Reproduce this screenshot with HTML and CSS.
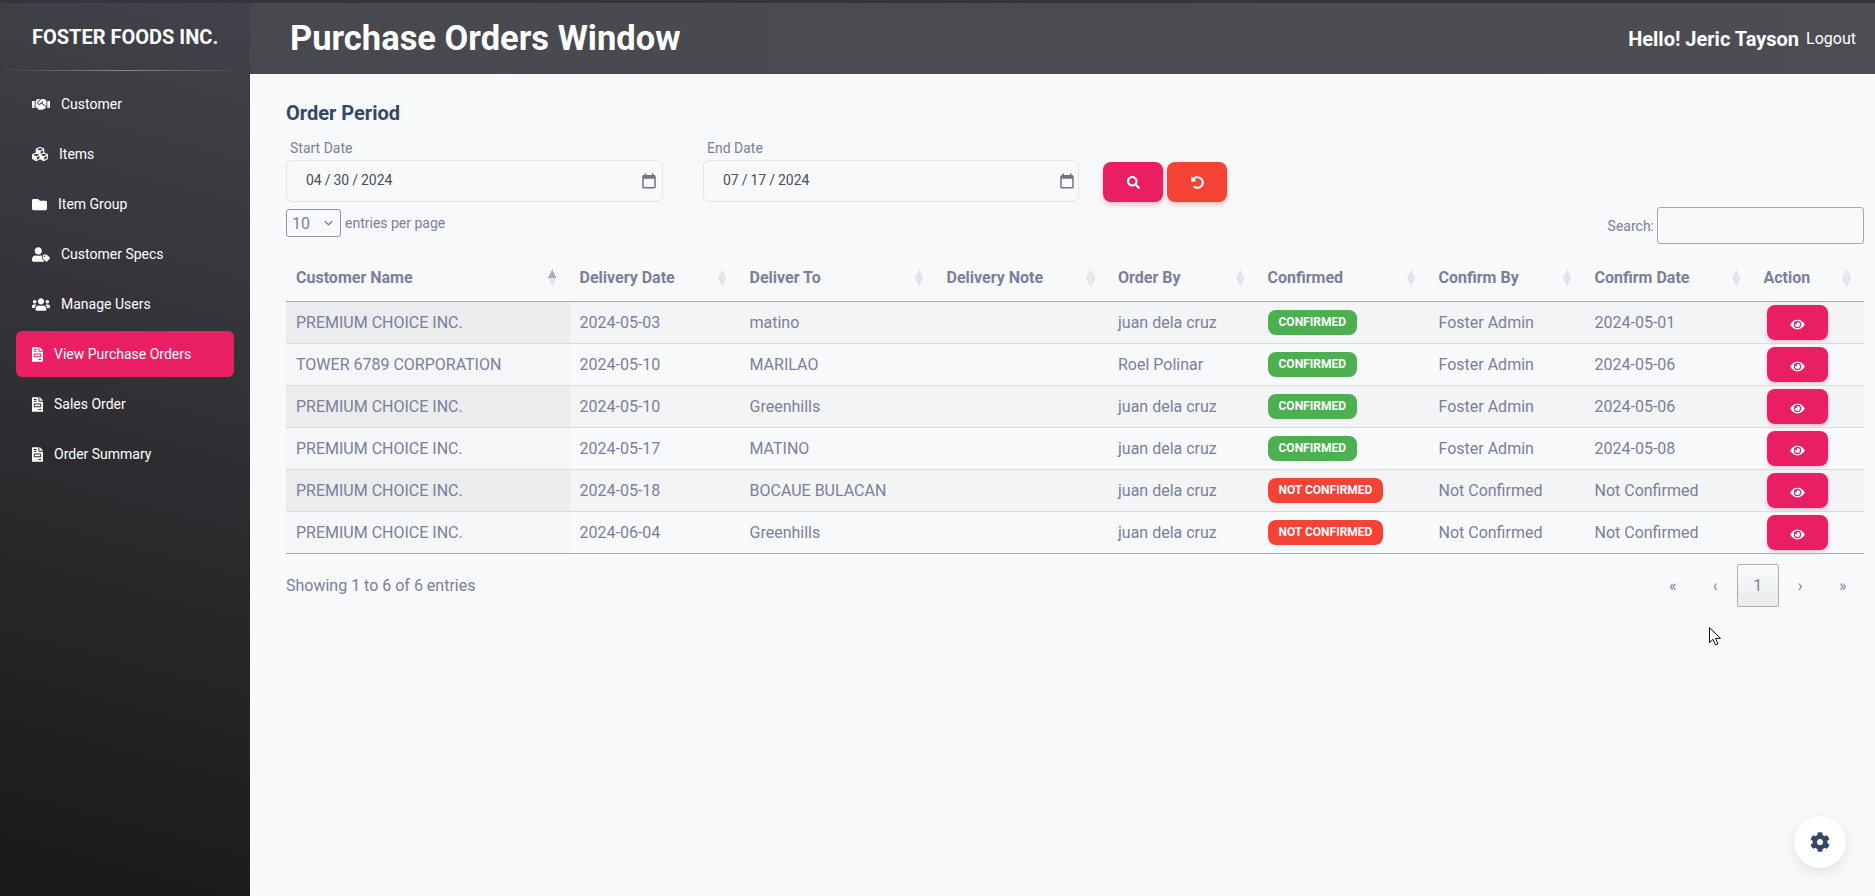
FILE: index.html
```html
<!DOCTYPE html>
<html lang="en">
<head>
    <meta charset="UTF-8">
    <meta name="viewport" content="width=device-width, initial-scale=1.0">
    <title>Purchase Orders Window</title>
    <link rel="stylesheet" href="styles.css">
</head>
<body>
    <svg class="icon-defs" xmlns="http://www.w3.org/2000/svg">
        <symbol id="i-handshake" viewBox="0 0 640 512"><path d="M434.7 64h-85.9c-8 0-15.7 3-21.6 8.4l-98.3 90c-.1.1-.2.3-.3.4-16.6 15.6-16.3 40.5-2.1 56 12.7 13.9 39.4 17.6 56.1 2.7.1-.1.3-.1.4-.2l79.9-73.2c6.5-5.9 16.7-5.5 22.6 1 6 6.5 5.5 16.6-1 22.6l-26.1 23.9L504 313.8c2.9 2.4 5.5 5 7.9 7.7V128l-54.6-54.6c-5.9-6-14.1-9.4-22.6-9.4zM544 128.2v223.9c0 17.7 14.3 32 32 32h64V128.2h-96zm48 223.9c-8.8 0-16-7.2-16-16s7.2-16 16-16 16 7.2 16 16-7.2 16-16 16zM0 384h64c17.7 0 32-14.3 32-32V128.2H0V384zm48-63.9c8.8 0 16 7.2 16 16s-7.2 16-16 16-16-7.2-16-16c0-8.9 7.2-16 16-16zm435.9 18.6L334.6 217.5l-30 27.5c-29.7 27.1-75.2 24.5-101.7-4.4-26.9-29.4-24.8-74.9 4.4-101.7L289.1 64h-83.8c-8.5 0-16.6 3.4-22.6 9.4L128 128v223.9h18.3l90.5 81.9c27.4 22.3 67.7 18.1 90-9.3l.2-.2 17.9 15.5c15.9 13 39.4 10.5 52.3-5.4l31.4-38.6 5.4 4.4c13.7 11.1 33.9 9.1 45-4.7l9.5-11.7c11.2-13.8 9.1-33.9-4.6-45.1z"/></symbol>
        <symbol id="i-cubes" viewBox="0 0 512 512"><path d="M488.6 250.2L392 214V105.5c0-15-9.3-28.4-23.4-33.7l-100-37.5c-8.1-3.1-17.1-3.1-25.3 0l-100 37.5c-14.1 5.3-23.4 18.7-23.4 33.7V214l-96.6 36.2C9.3 255.5 0 268.9 0 283.9V394c0 13.6 7.7 26.1 19.9 32.2l100 50c10.1 5.1 22.1 5.1 32.2 0l103.9-52 103.9 52c10.1 5.1 22.1 5.1 32.2 0l100-50c12.2-6.1 19.9-18.6 19.9-32.2V283.9c0-15-9.3-28.4-23.4-33.7zM358 214.8l-85 31.9v-68.2l85-37v73.3zM154 104.1l102-38.2 102 38.2v.6l-102 41.4-102-41.4v-.6zm84 291.1l-85 42.5v-79.1l85-38.8v75.4zm0-112l-102 41.4-102-41.4v-.6l102-38.2 102 38.2v.6zm240 112l-85 42.5v-79.1l85-38.8v75.4zm0-112l-102 41.4-102-41.4v-.6l102-38.2 102 38.2v.6z"/></symbol>
        <symbol id="i-folder" viewBox="0 0 512 512"><path d="M464 128H272l-64-64H48C21.49 64 0 85.49 0 112v288c0 26.51 21.49 48 48 48h416c26.51 0 48-21.49 48-48V176c0-26.51-21.49-48-48-48z"/></symbol>
        <symbol id="i-usertag" viewBox="0 0 640 512"><path d="M630.6 364.9l-90.3-90.2c-12-12-28.3-18.7-45.3-18.7h-79.3c-17.7 0-32 14.3-32 32v79.2c0 17 6.7 33.2 18.7 45.2l90.3 90.2c12.5 12.5 32.8 12.5 45.3 0l92.5-92.5c12.6-12.4 12.6-32.7.1-45.2zm-182.8-21c-13.3 0-24-10.7-24-24s10.7-24 24-24 24 10.7 24 24c0 13.2-10.7 24-24 24zm-223.8-88c70.7 0 128-57.3 128-128C352 57.3 294.7 0 224 0S96 57.3 96 128c0 70.6 57.3 127.9 128 127.9zm127.8 111.2V294c-12.2-3.6-24.9-6.2-38.2-6.2h-16.7c-22.2 10.2-46.9 16-72.9 16s-50.6-5.8-72.9-16h-16.7C60.2 287.9 0 348.1 0 422.3v41.6c0 26.5 21.5 48 48 48h352c15.5 0 29.1-7.5 37.9-18.9l-58-58c-18.1-18.1-28.1-42.2-28.1-67.9z"/></symbol>
        <symbol id="i-users" viewBox="0 0 640 512"><path d="M96 224c35.3 0 64-28.7 64-64s-28.7-64-64-64-64 28.7-64 64 28.7 64 64 64zm448 0c35.3 0 64-28.7 64-64s-28.7-64-64-64-64 28.7-64 64 28.7 64 64 64zm32 32h-64c-17.6 0-33.5 7.1-45.1 18.6 40.3 22.1 68.9 62 75.1 109.4h66c17.7 0 32-14.3 32-32v-32c0-35.3-28.7-64-64-64zm-256 0c61.9 0 112-50.1 112-112S381.9 32 320 32 208 82.1 208 144s50.1 112 112 112zm76.8 32h-8.3c-20.8 10-43.9 16-68.5 16s-47.6-6-68.5-16h-8.3C179.6 288 128 339.6 128 403.2V432c0 26.5 21.5 48 48 48h288c26.5 0 48-21.5 48-48v-28.8c0-63.6-51.6-115.2-115.2-115.2zm-223.7-13.4C161.5 263.1 145.6 256 128 256H64c-35.3 0-64 28.7-64 64v32c0 17.7 14.3 32 32 32h65.9c6.3-47.4 34.9-87.3 75.2-109.4z"/></symbol>
        <symbol id="i-invoice" viewBox="0 0 384 512"><path d="M288 256H96v64h192v-64zm89-151L279.1 7c-4.5-4.5-10.6-7-17-7H256v128h128v-6.1c0-6.3-2.5-12.4-7-16.9zm-153 31V0H24C10.7 0 0 10.7 0 24v464c0 13.3 10.7 24 24 24h336c13.3 0 24-10.7 24-24V160H248c-13.2 0-24-10.8-24-24zM64 72c0-4.42 3.58-8 8-8h80c4.42 0 8 3.58 8 8v16c0 4.42-3.58 8-8 8H72c-4.42 0-8-3.58-8-8V72zm0 64c0-4.42 3.58-8 8-8h80c4.42 0 8 3.58 8 8v16c0 4.42-3.58 8-8 8H72c-4.42 0-8-3.58-8-8v-16zm256 304c0 4.42-3.58 8-8 8h-80c-4.42 0-8-3.58-8-8v-16c0-4.42 3.58-8 8-8h80c4.42 0 8 3.58 8 8v16zm0-200v96c0 8.84-7.16 16-16 16H80c-8.84 0-16-7.16-16-16v-96c0-8.84 7.16-16 16-16h224c8.84 0 16 7.16 16 16z"/></symbol>
        <symbol id="i-search" viewBox="0 0 512 512"><path d="M505 442.7L405.3 343c-4.5-4.5-10.6-7-17-7H372c27.6-35.3 44-79.7 44-128C416 93.1 322.9 0 208 0S0 93.1 0 208s93.1 208 208 208c48.3 0 92.7-16.4 128-44v16.3c0 6.4 2.5 12.5 7 17l99.7 99.7c9.4 9.4 24.6 9.4 33.9 0l28.3-28.3c9.4-9.4 9.4-24.6.1-34zM208 336c-70.7 0-128-57.2-128-128 0-70.7 57.2-128 128-128 70.7 0 128 57.2 128 128 0 70.7-57.2 128-128 128z"/></symbol>
        <symbol id="i-undo" viewBox="0 0 512 512"><path d="M255.545 8c-66.269.119-126.438 26.233-170.86 68.685L48.971 40.971C33.851 25.851 8 36.559 8 57.941V192c0 13.255 10.745 24 24 24h134.059c21.382 0 32.09-25.851 16.971-40.971l-41.75-41.75c30.864-28.899 70.801-44.907 113.23-45.273 92.398-.798 170.283 73.977 169.484 169.442C423.236 348.009 349.816 424 256 424c-41.127 0-79.997-14.678-110.63-41.556-4.743-4.161-11.906-3.908-16.368.553L89.34 422.659c-4.872 4.872-4.631 12.815.482 17.433C133.798 479.813 192.074 504 256 504c136.966 0 247.999-111.033 248-247.998C504.001 119.193 392.354 7.755 255.545 8z"/></symbol>
        <symbol id="i-eye" viewBox="0 0 576 512"><path d="M572.52 241.4C518.29 135.59 410.93 64 288 64S57.68 135.64 3.48 241.41a32.35 32.35 0 0 0 0 29.19C57.71 376.41 165.07 448 288 448s230.32-71.64 284.52-177.41a32.35 32.35 0 0 0 0-29.19zM288 400a144 144 0 1 1 144-144 143.93 143.93 0 0 1-144 144zm0-240a95.31 95.31 0 0 0-25.31 3.79 47.85 47.85 0 0 1-66.9 66.9A95.78 95.78 0 1 0 288 160z"/></symbol>
        <symbol id="i-cog" viewBox="0 0 512 512"><path d="M487.4 315.7l-42.6-24.6c4.3-23.2 4.3-47 0-70.2l42.6-24.6c4.9-2.8 7.1-8.6 5.5-14-11.1-35.6-30-67.8-54.7-94.6-3.8-4.1-10-5.1-14.8-2.3L380.8 110c-17.9-15.4-38.5-27.3-60.8-35.1V25.8c0-5.6-3.9-10.5-9.4-11.7-36.7-8.2-74.3-7.8-109.2 0-5.5 1.2-9.4 6.1-9.4 11.7V75c-22.2 7.9-42.8 19.8-60.8 35.1L88.7 85.5c-4.9-2.8-11-1.9-14.8 2.3-24.7 26.7-43.6 58.9-54.7 94.6-1.7 5.4.6 11.2 5.5 14L67.3 221c-4.3 23.2-4.3 47 0 70.2l-42.6 24.6c-4.9 2.8-7.1 8.6-5.5 14 11.1 35.6 30 67.8 54.7 94.6 3.8 4.1 10 5.1 14.8 2.3l42.6-24.6c17.9 15.4 38.5 27.3 60.8 35.1v49.2c0 5.6 3.9 10.5 9.4 11.7 36.7 8.2 74.3 7.8 109.2 0 5.5-1.2 9.4-6.1 9.4-11.7v-49.2c22.2-7.9 42.8-19.8 60.8-35.1l42.6 24.6c4.9 2.8 11 1.9 14.8-2.3 24.7-26.7 43.6-58.9 54.7-94.6 1.5-5.5-.7-11.3-5.6-14.1zM256 336c-44.1 0-80-35.9-80-80s35.9-80 80-80 80 35.9 80 80-35.9 80-80 80z"/></symbol>
        <symbol id="i-calendar" viewBox="0 0 24 24"><path d="M19 4h-1V2h-2v2H8V2H6v2H5a2 2 0 0 0-2 2v14a2 2 0 0 0 2 2h14a2 2 0 0 0 2-2V6a2 2 0 0 0-2-2zm0 16H5V9h14v11z"/></symbol>
    </svg>

    <div class="app">
        <aside class="sidebar">
            <div class="brand">FOSTER FOODS INC.</div>
            <hr class="brand-line">
            <nav class="side-nav">
                <a class="nav-item"><svg class="nav-icon w-wide"><use href="#i-handshake"/></svg>Customer</a>
                <a class="nav-item"><svg class="nav-icon w-cubes"><use href="#i-cubes"/></svg>Items</a>
                <a class="nav-item"><svg class="nav-icon w-folder"><use href="#i-folder"/></svg>Item Group</a>
                <a class="nav-item"><svg class="nav-icon w-wide"><use href="#i-usertag"/></svg>Customer Specs</a>
                <a class="nav-item"><svg class="nav-icon w-wide"><use href="#i-users"/></svg>Manage Users</a>
                <a class="nav-item active"><svg class="nav-icon w-file"><use href="#i-invoice"/></svg>View Purchase Orders</a>
                <a class="nav-item"><svg class="nav-icon w-file"><use href="#i-invoice"/></svg>Sales Order</a>
                <a class="nav-item"><svg class="nav-icon w-file"><use href="#i-invoice"/></svg>Order Summary</a>
            </nav>
        </aside>

        <div class="main">
            <header class="topbar">
                <h1>Purchase Orders Window</h1>
                <div class="user-box">
                    <strong>Hello! Jeric Tayson</strong>
                    <a class="logout">Logout</a>
                </div>
            </header>

            <section class="content">
                <h2>Order Period</h2>
                <div class="filters">
                    <div class="field">
                        <label>Start Date</label>
                        <div class="date-box"><span>04 / 30 / 2024</span><svg class="cal"><use href="#i-calendar"/></svg></div>
                    </div>
                    <div class="field field-end">
                        <label>End Date</label>
                        <div class="date-box"><span>07 / 17 / 2024</span><svg class="cal"><use href="#i-calendar"/></svg></div>
                    </div>
                    <div class="filter-btns">
                        <button class="btn btn-pink"><svg class="btn-icon"><use href="#i-search"/></svg></button>
                        <button class="btn btn-red"><svg class="btn-icon"><use href="#i-undo"/></svg></button>
                    </div>
                </div>

                <div class="table-top">
                    <div class="entries">
                        <span class="entries-select">10<svg class="chev" viewBox="0 0 10 6"><path d="M1 1l4 4 4-4" fill="none" stroke="currentColor" stroke-width="1.4"/></svg></span>
                        <span>entries per page</span>
                    </div>
                    <div class="search-wrap">
                        <span>Search:</span>
                        <span class="search-box"></span>
                    </div>
                </div>

                <table class="orders">
                    <thead>
                        <tr>
                            <th class="c1 sorted"><div class="th-in">Customer Name<i class="sort"></i></div></th>
                            <th class="c2"><div class="th-in">Delivery Date<i class="sort"></i></div></th>
                            <th class="c3"><div class="th-in">Deliver To<i class="sort"></i></div></th>
                            <th class="c4"><div class="th-in">Delivery Note<i class="sort"></i></div></th>
                            <th class="c5"><div class="th-in">Order By<i class="sort"></i></div></th>
                            <th class="c6"><div class="th-in">Confirmed<i class="sort"></i></div></th>
                            <th class="c7"><div class="th-in">Confirm By<i class="sort"></i></div></th>
                            <th class="c8"><div class="th-in">Confirm Date<i class="sort"></i></div></th>
                            <th class="c9"><div class="th-in">Action<i class="sort"></i></div></th>
                        </tr>
                    </thead>
                    <tbody>
                        <tr>
                            <td>PREMIUM CHOICE INC.</td><td>2024-05-03</td><td>matino</td><td></td><td>juan dela cruz</td>
                            <td><span class="badge ok">CONFIRMED</span></td><td>Foster Admin</td><td>2024-05-01</td>
                            <td><button class="btn-view"><svg class="eye"><use href="#i-eye"/></svg></button></td>
                        </tr>
                        <tr>
                            <td>TOWER 6789 CORPORATION</td><td>2024-05-10</td><td>MARILAO</td><td></td><td>Roel Polinar</td>
                            <td><span class="badge ok">CONFIRMED</span></td><td>Foster Admin</td><td>2024-05-06</td>
                            <td><button class="btn-view"><svg class="eye"><use href="#i-eye"/></svg></button></td>
                        </tr>
                        <tr>
                            <td>PREMIUM CHOICE INC.</td><td>2024-05-10</td><td>Greenhills</td><td></td><td>juan dela cruz</td>
                            <td><span class="badge ok">CONFIRMED</span></td><td>Foster Admin</td><td>2024-05-06</td>
                            <td><button class="btn-view"><svg class="eye"><use href="#i-eye"/></svg></button></td>
                        </tr>
                        <tr>
                            <td>PREMIUM CHOICE INC.</td><td>2024-05-17</td><td>MATINO</td><td></td><td>juan dela cruz</td>
                            <td><span class="badge ok">CONFIRMED</span></td><td>Foster Admin</td><td>2024-05-08</td>
                            <td><button class="btn-view"><svg class="eye"><use href="#i-eye"/></svg></button></td>
                        </tr>
                        <tr>
                            <td>PREMIUM CHOICE INC.</td><td>2024-05-18</td><td>BOCAUE BULACAN</td><td></td><td>juan dela cruz</td>
                            <td><span class="badge no">NOT CONFIRMED</span></td><td>Not Confirmed</td><td>Not Confirmed</td>
                            <td><button class="btn-view"><svg class="eye"><use href="#i-eye"/></svg></button></td>
                        </tr>
                        <tr>
                            <td>PREMIUM CHOICE INC.</td><td>2024-06-04</td><td>Greenhills</td><td></td><td>juan dela cruz</td>
                            <td><span class="badge no">NOT CONFIRMED</span></td><td>Not Confirmed</td><td>Not Confirmed</td>
                            <td><button class="btn-view"><svg class="eye"><use href="#i-eye"/></svg></button></td>
                        </tr>
                    </tbody>
                </table>

                <div class="table-foot">
                    <span>Showing 1 to 6 of 6 entries</span>
                    <div class="pager">
                        <a class="page-link small">«</a>
                        <a class="page-link small">‹</a>
                        <a class="page-link current">1</a>
                        <a class="page-link small">›</a>
                        <a class="page-link small">»</a>
                    </div>
                </div>
            </section>
        </div>
    </div>

    <!-- mouse pointer that was in the shot -->
    <svg class="pointer" viewBox="0 0 12 19"><path d="M.5.7v15l3.6-3.4 2.4 5.6 2.5-1-2.4-5.5h4.9z" fill="#fff" stroke="#111" stroke-width="1"/></svg>

    <a class="fab"><svg class="fab-icon"><use href="#i-cog"/></svg></a>
</body>
</html>
```

FILE: styles.css
```css
* {
    box-sizing: border-box;
}
html, body {
    height: 100%;
}
body {
    margin: 0;
    font-family: Roboto, "Liberation Sans", sans-serif;
    font-size: 14px;
    color: #7b809a;
    background: #f8f9fb;
    overflow: hidden;
}
.icon-defs {
    display: none;
}
.app {
    display: flex;
    height: 896px;
    border-top: 3px solid #35353b;
}

/* sidebar */
.sidebar {
    width: 250px;
    flex: none;
    background: linear-gradient(195deg, #42424a, #191919);
    color: #fff;
}
.brand {
    padding: 23px 0 0 32px;
    height: 67px;
    font-size: 20px;
    line-height: 23px;
    font-weight: 700;
}
.brand-line {
    margin: 0;
    height: 1px;
    border: 0;
    background: linear-gradient(90deg, rgba(255,255,255,0), rgba(255,255,255,.4), rgba(255,255,255,0));
}
.side-nav {
    padding-top: 6px;
}
.nav-item {
    display: flex;
    align-items: center;
    gap: 11px;
    height: 46px;
    margin: 4px 16px;
    padding-left: 16px;
    border-radius: 6px;
    font-size: 14px;
    color: #fff;
}
.nav-item.active {
    background: #e91e63;
}
.nav-icon {
    height: 15px;
    fill: #fff;
    flex: none;
}
.w-wide { width: 18px; }
.w-cubes { width: 16px; height: 16px; }
.w-folder { width: 15px; }
.w-file { width: 11px; height: 15px; }

/* top bar */
.main {
    flex: 1;
    min-width: 0;
}
.topbar {
    display: flex;
    align-items: center;
    justify-content: space-between;
    height: 71px;
    padding: 0 19px 2px 40px;
    background: linear-gradient(90deg, #48484f, #4e4d54);
    color: #fff;
}
.topbar h1 {
    margin: 0;
    font-size: 34.5px;
    font-weight: 700;
}
.user-box {
    display: flex;
    align-items: center;
    gap: 7px;
    margin-top: 2px;
    font-size: 20px;
}
.logout {
    font-size: 16px;
}

/* content */
.content {
    padding: 27px 11px 0 36px;
}
.content h2 {
    margin: 0;
    font-size: 20px;
    line-height: 24px;
    font-weight: 700;
    color: #344767;
}
.filters {
    display: flex;
    align-items: flex-end;
    margin-top: 13px;
}
.field label {
    display: block;
    height: 22px;
    margin-left: 4px;
    font-size: 14px;
    line-height: 20px;
}
.field .date-box {
    display: flex;
    align-items: center;
    justify-content: space-between;
    width: 377px;
    height: 42px;
    padding: 0 4px 2px 19px;
    border: 1px solid #e2e4ea;
    border-radius: 6px;
    color: #495057;
    font-size: 14px;
    word-spacing: -.5px;
}
.field-end {
    margin-left: 40px;
}
.field-end .date-box {
    width: 376px;
    padding-right: 2px;
}
.cal {
    width: 18px;
    height: 18px;
    margin-top: 2px;
    fill: #6f7480;
}
.filter-btns {
    display: flex;
    gap: 4px;
    margin-left: 24px;
}
.btn {
    width: 60px;
    height: 40px;
    border: 0;
    border-radius: 8px;
    display: flex;
    align-items: center;
    justify-content: center;
    padding: 0;
}
.btn-pink {
    background: #e91e63;
    box-shadow: 0 3px 5px rgba(233,30,99,.25);
}
.btn-red {
    background: #f44335;
    box-shadow: 0 3px 5px rgba(244,67,53,.25);
}
.btn-icon {
    width: 13px;
    height: 13px;
    fill: #fff;
}

.table-top {
    display: flex;
    justify-content: space-between;
    height: 52px;
    margin-top: 5px;
}
.entries {
    display: flex;
    align-items: center;
    gap: 4px;
    height: 28px;
    margin-top: 2px;
}
.entries-select {
    display: flex;
    align-items: center;
    justify-content: space-between;
    width: 55px;
    height: 28px;
    padding: 0 7px 0 5px;
    border: 1px solid #8f93a3;
    border-radius: 3px;
    font-size: 16px;
}
.chev {
    width: 9px;
    height: 6px;
}
.search-wrap {
    display: flex;
    align-items: center;
    gap: 3px;
    height: 37px;
}
.search-box {
    display: block;
    width: 207px;
    height: 37px;
    border: 1px solid #a6a8b0;
    border-radius: 3px;
}

/* table */
.orders {
    width: 1578px;
    table-layout: fixed;
    border-collapse: collapse;
    font-size: 16px;
}
.orders th {
    height: 42px;
    padding: 0 13px 4px 10px;
    text-align: left;
    font-size: 16px;
    font-weight: 700;
    border-bottom: 1px solid #aaacb5;
}
.th-in {
    display: flex;
    align-items: center;
    justify-content: space-between;
}
.c1 { width: 283.5px; }
.c2 { width: 170px; }
.c3 { width: 197px; }
.c4 { width: 171.5px; }
.c5 { width: 149.5px; }
.c6 { width: 171px; }
.c7 { width: 156px; }
.c8 { width: 169px; }
.c9 { width: 110.5px; }
.sort {
    display: block;
    width: 9px;
    height: 18px;
    background:
        linear-gradient(to bottom right, transparent 50%, #e3e5eb 50%) left top / 50% 50% no-repeat,
        linear-gradient(to bottom left, transparent 50%, #e3e5eb 50%) right top / 50% 50% no-repeat,
        linear-gradient(to top right, transparent 50%, #e3e5eb 50%) left bottom / 50% 50% no-repeat,
        linear-gradient(to top left, transparent 50%, #e3e5eb 50%) right bottom / 50% 50% no-repeat;
}
.sorted .sort {
    background:
        linear-gradient(to bottom right, transparent 50%, #a9adc0 50%) left top / 50% 50% no-repeat,
        linear-gradient(to bottom left, transparent 50%, #a9adc0 50%) right top / 50% 50% no-repeat,
        linear-gradient(to top right, transparent 50%, #e3e5eb 50%) left bottom / 50% 50% no-repeat,
        linear-gradient(to top left, transparent 50%, #e3e5eb 50%) right bottom / 50% 50% no-repeat;
}
.orders td {
    height: 42px;
    padding: 0 10px;
    border-bottom: 1px solid #d8d9dd;
    white-space: nowrap;
}
.orders tbody tr:last-child td {
    border-bottom-color: #aaacb5;
}
.orders tbody tr:nth-child(odd) td {
    background: #f3f4f6;
}
.orders tbody td:first-child {
    background: #f5f6f7;
}
.orders tbody tr:nth-child(odd) td:first-child {
    background: #ebecee;
}
.badge {
    display: inline-block;
    height: 25px;
    padding: 0 11px;
    border-radius: 8px;
    color: #fff;
    font-size: 12px;
    line-height: 25px;
    font-weight: 700;
    vertical-align: middle;
}
.badge.ok {
    background: #4caf50;
}
.badge.no {
    background: #f44335;
}
.btn-view {
    display: flex;
    align-items: center;
    justify-content: center;
    width: 61px;
    height: 35px;
    margin-left: 3px;
    padding: 4px 0 0;
    border: 0;
    border-radius: 8px;
    background: #e91e63;
    box-shadow: 0 2px 4px rgba(233,30,99,.25);
}
.eye {
    width: 15px;
    height: 13px;
    fill: #fff;
}

.table-foot {
    display: flex;
    align-items: center;
    justify-content: space-between;
    margin-top: 10px;
    font-size: 16px;
}
.pager {
    display: flex;
}
.page-link {
    display: flex;
    align-items: center;
    justify-content: center;
    width: 42.5px;
    height: 43px;
}
.page-link.small {
    font-size: 16px;
}
.page-link.current {
    border: 1px solid #aaacb5;
    border-radius: 2px;
    font-size: 16px;
    background: linear-gradient(#fbfbfc, #e9eaec);
}

/* things lying over the page */
.pointer {
    position: absolute;
    left: 1709px;
    top: 627px;
    width: 12px;
    height: 19px;
}
.fab {
    position: absolute;
    left: 1794px;
    top: 816px;
    display: flex;
    align-items: center;
    justify-content: center;
    width: 52px;
    height: 52px;
    border-radius: 50%;
    background: #fff;
    box-shadow: 0 4px 12px rgba(0,0,0,.1);
}
.fab-icon {
    width: 20px;
    height: 20px;
    fill: #344767;
}
```
